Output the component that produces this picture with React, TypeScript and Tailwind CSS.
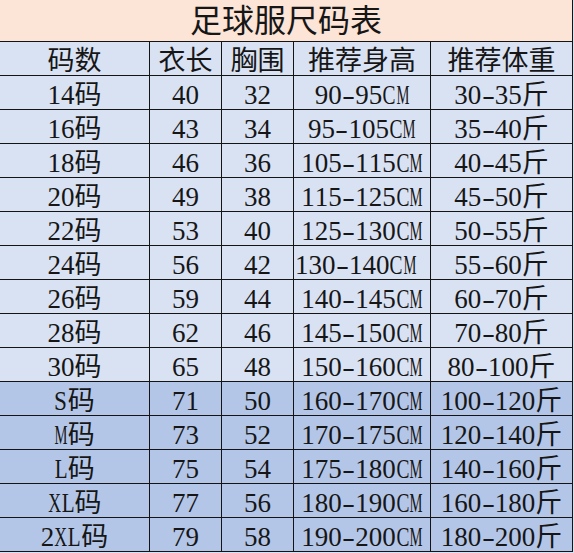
const rows = [
  ["14码", "40", "32", "90-95CM", "30-35斤"],
  ["16码", "43", "34", "95-105CM", "35-40斤"],
  ["18码", "46", "36", "105-115CM", "40-45斤"],
  ["20码", "49", "38", "115-125CM", "45-50斤"],
  ["22码", "53", "40", "125-130CM", "50-55斤"],
  ["24码", "56", "42", "130-140CM", "55-60斤"],
  ["26码", "59", "44", "140-145CM", "60-70斤"],
  ["28码", "62", "46", "145-150CM", "70-80斤"],
  ["30码", "65", "48", "150-160CM", "80-100斤"],
  ["S码", "71", "50", "160-170CM", "100-120斤"],
  ["M码", "73", "52", "170-175CM", "120-140斤"],
  ["L码", "75", "54", "175-180CM", "140-160斤"],
  ["XL码", "77", "56", "180-190CM", "160-180斤"],
  ["2XL码", "79", "58", "190-200CM", "180-200斤"],
];

const widths = ["w-[150px]", "w-[72px]", "w-[72px]", "w-[137px]", "w-[142px]"];

// half-width glyphs squeezed into 0.5em boxes like the Song font in the sheet
const narrow: Record<string, string> = {
  C: "scale-x-[0.72]",
  M: "scale-x-[0.54]",
  S: "scale-x-[0.86]",
  X: "scale-x-[0.66]",
  L: "scale-x-[0.78]",
  "-": "scale-x-[1.45]",
};

function Txt({ s }: { s: string }) {
  return (
    <>
      {[...s].map((ch, i) =>
        narrow[ch] ? (
          <span key={i} className="inline-flex w-[0.5em] justify-center">
            <span className={`inline-block ${narrow[ch]}`}>{ch}</span>
          </span>
        ) : (
          <span key={i}>{ch}</span>
        )
      )}
    </>
  );
}

function Row({ cells, dark, left }: { cells: string[]; dark?: boolean; left?: number }) {
  return (
    <div className={`flex h-[34px] w-[573px] border-b border-[#141414] ${dark ? "bg-[#B4C6E7]" : "bg-[#D9E2F3]"}`}>
      {cells.map((c, i) => (
        <div
          key={i}
          className={`flex h-full items-end whitespace-nowrap border-r border-[#141414] leading-[27px] ${widths[i]} ${
            left === i ? "justify-start pl-px" : "justify-center"
          }`}
        >
          <Txt s={c} />
        </div>
      ))}
    </div>
  );
}

export default function App() {
  return (
    <div
      className="flex h-[553px] w-[574px] flex-col overflow-hidden bg-[#D9E2F3] text-[27px] text-[#161616]"
      style={{ fontFamily: '"Liberation Serif", "Noto Sans CJK SC", serif' }}
    >
      <div className="flex h-[42px] w-[573px] shrink-0 items-center justify-center border-b border-r border-[#141414] bg-[#FCE4D6] text-[32px] leading-none">
        足球服尺码表
      </div>
      <Row cells={["码数", "衣长", "胸围", "推荐身高", "推荐体重"]} />
      {rows.map((r, i) => (
        <Row key={r[0]} cells={r} dark={i >= 9} left={r[0] === "24码" ? 3 : undefined} />
      ))}
    </div>
  );
}
